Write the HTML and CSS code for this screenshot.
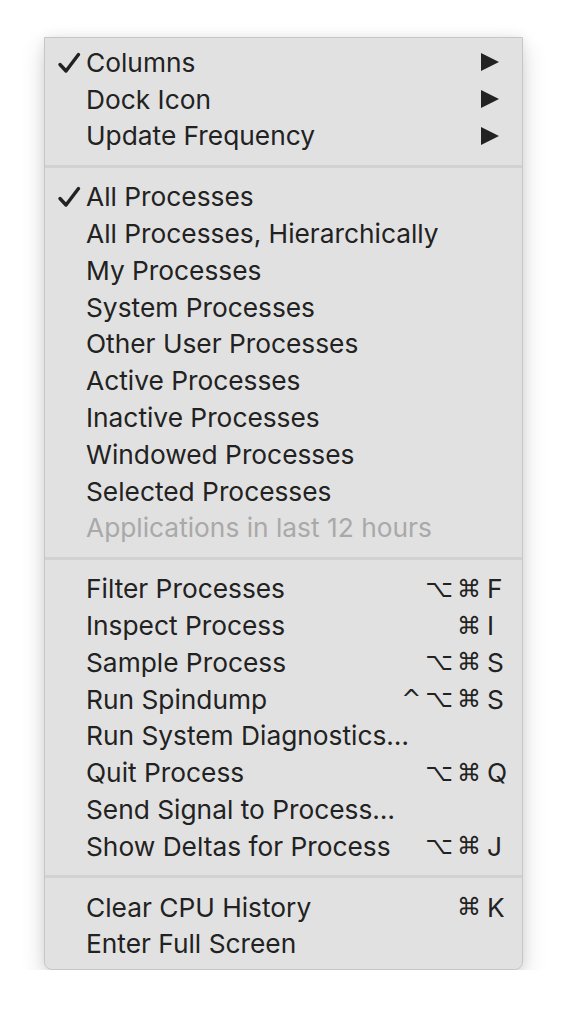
FILE: index.html
```html
<!DOCTYPE html>
<html>
<head>
<meta charset="utf-8">
<link rel="stylesheet" href="styles.css">
</head>
<body>
<div class="menu">
  <div class="row"><span class="check"><svg viewBox="0 0 24 22" width="24" height="22"><path d="M3 12.5 L9 19 L21.5 2.5" fill="none" stroke="#222" stroke-width="3.4" stroke-linecap="round" stroke-linejoin="round"/></svg></span><span class="label">Columns</span><span class="sub"><svg viewBox="0 0 18 18" width="18" height="18"><polygon points="0,0 18,9 0,18" fill="#222"/></svg></span></div>
  <div class="row"><span class="check"></span><span class="label">Dock Icon</span><span class="sub"><svg viewBox="0 0 18 18" width="18" height="18"><polygon points="0,0 18,9 0,18" fill="#222"/></svg></span></div>
  <div class="row"><span class="check"></span><span class="label">Update Frequency</span><span class="sub"><svg viewBox="0 0 18 18" width="18" height="18"><polygon points="0,0 18,9 0,18" fill="#222"/></svg></span></div>
  <div class="sep"></div>
  <div class="row"><span class="check"><svg viewBox="0 0 24 22" width="24" height="22"><path d="M3 12.5 L9 19 L21.5 2.5" fill="none" stroke="#222" stroke-width="3.4" stroke-linecap="round" stroke-linejoin="round"/></svg></span><span class="label">All Processes</span></div>
  <div class="row"><span class="check"></span><span class="label">All Processes, Hierarchically</span></div>
  <div class="row"><span class="check"></span><span class="label">My Processes</span></div>
  <div class="row"><span class="check"></span><span class="label">System Processes</span></div>
  <div class="row"><span class="check"></span><span class="label">Other User Processes</span></div>
  <div class="row"><span class="check"></span><span class="label">Active Processes</span></div>
  <div class="row"><span class="check"></span><span class="label">Inactive Processes</span></div>
  <div class="row"><span class="check"></span><span class="label">Windowed Processes</span></div>
  <div class="row"><span class="check"></span><span class="label">Selected Processes</span></div>
  <div class="row disabled"><span class="check"></span><span class="label">Applications in last 12 hours</span></div>
  <div class="sep"></div>
  <div class="row"><span class="check"></span><span class="label">Filter Processes</span><span class="keys"><span class="mods">⌥⌘</span><span class="key">F</span></span></div>
  <div class="row"><span class="check"></span><span class="label">Inspect Process</span><span class="keys"><span class="mods">⌘</span><span class="key">I</span></span></div>
  <div class="row"><span class="check"></span><span class="label">Sample Process</span><span class="keys"><span class="mods">⌥⌘</span><span class="key">S</span></span></div>
  <div class="row"><span class="check"></span><span class="label">Run Spindump</span><span class="keys"><span class="mods">^⌥⌘</span><span class="key">S</span></span></div>
  <div class="row"><span class="check"></span><span class="label">Run System Diagnostics…</span></div>
  <div class="row"><span class="check"></span><span class="label">Quit Process</span><span class="keys"><span class="mods">⌥⌘</span><span class="key">Q</span></span></div>
  <div class="row"><span class="check"></span><span class="label">Send Signal to Process…</span></div>
  <div class="row"><span class="check"></span><span class="label">Show Deltas for Process</span><span class="keys"><span class="mods">⌥⌘</span><span class="key">J</span></span></div>
  <div class="sep"></div>
  <div class="row"><span class="check"></span><span class="label">Clear CPU History</span><span class="keys"><span class="mods">⌘</span><span class="key">K</span></span></div>
  <div class="row"><span class="check"></span><span class="label">Enter Full Screen</span></div>
</div>
</body>
</html>
```

FILE: styles.css
```css
html, body {
  margin: 0;
  padding: 0;
  background: #ffffff;
}
body {
  padding: 37px 0 0 44px;
  font-family: Inter, "Noto Sans", "DejaVu Sans", sans-serif;
}
.menu {
  width: 479px;
  height: 933px;
  box-sizing: border-box;
  background: #e1e1e1;
  border: 1px solid #c6c6c6;
  border-radius: 0 0 8px 8px;
  box-shadow: 0 10px 24px rgba(0, 0, 0, 0.16), 0 0 12px rgba(0, 0, 0, 0.07);
  padding-top: 6px;
  display: flex;
  flex-direction: column;
  color: #222222;
  font-size: 26.3px;
}
.row {
  height: 36.8px;
  flex: none;
  display: flex;
  align-items: center;
  padding: 0 20px 0 12px;
}
.check {
  width: 29px;
  display: flex;
  align-items: center;
  justify-content: flex-start;
  padding-top: 1px;
}
.label {
  flex: 1;
  white-space: nowrap;
}
.disabled {
  color: #a9a9a9;
}
.sub {
  display: flex;
  align-items: center;
  margin-right: 3px;
}
.keys {
  display: flex;
  align-items: center;
}
.mods {
  font-family: "DejaVu Sans", sans-serif;
  font-size: 24px;
  text-align: right;
  letter-spacing: 4px;
}
.key {
  width: 15px;
  margin-left: 2px;
  text-align: left;
}
.sep {
  height: 24px;
  flex: none;
  display: flex;
  align-items: center;
}
.sep::before {
  content: "";
  display: block;
  width: 100%;
  height: 3px;
  background: #d2d2d2;
}
```
